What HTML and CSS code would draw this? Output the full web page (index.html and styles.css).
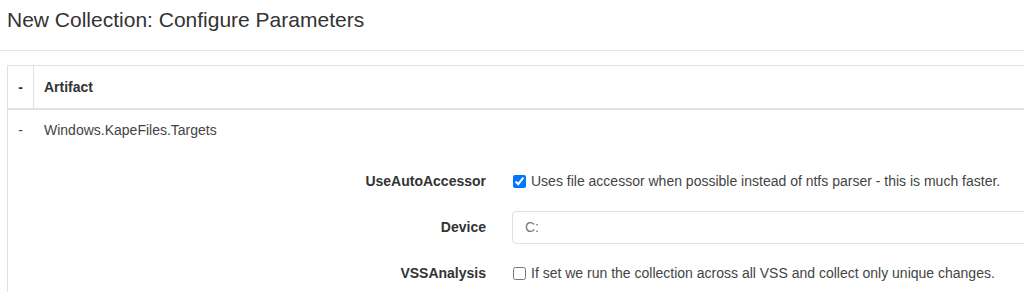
FILE: index.html
```html
<!DOCTYPE html>
<html lang="en">
<head>
    <meta charset="UTF-8">
    <meta name="viewport" content="width=device-width, initial-scale=1.0">
    <title>New Collection: Configure Parameters</title>
    <link rel="stylesheet" href="styles.css">
</head>
<body>

<div class="modal-header">
    <h1>New Collection: Configure Parameters</h1>
</div>

<div class="params">
    <div class="params-head">
        <div class="toggle">-</div>
        <div class="head-name">Artifact</div>
    </div>

    <div class="artifact">
        <div class="artifact-row">
            <div class="toggle">-</div>
            <div class="artifact-name">Windows.KapeFiles.Targets</div>
        </div>

        <div class="param-form">
            <label class="param-label" for="useauto">UseAutoAccessor</label>
            <div class="param-control">
                <input type="checkbox" id="useauto" checked>
                <span>Uses file accessor when possible instead of ntfs parser - this is much faster.</span>
            </div>

            <label class="param-label" for="device">Device</label>
            <div class="param-control">
                <input type="text" id="device" class="text-input" value="C:">
            </div>

            <label class="param-label" for="vss">VSSAnalysis</label>
            <div class="param-control">
                <input type="checkbox" id="vss">
                <span>If set we run the collection across all VSS and collect only unique changes.</span>
            </div>
        </div>
    </div>
</div>

</body>
</html>
```

FILE: styles.css
```css
body {
    font-family: "Liberation Sans", Arial, sans-serif;
    font-size: 14px;
    color: #333;
    margin: 0;
    padding: 0;
    background-color: #fff;
    overflow: hidden;
}
.modal-header {
    padding: 8px 7px 18px;
    border-bottom: 1px solid #e5e5e5;
}
.modal-header h1 {
    margin: 0;
    font-size: 21px;
    font-weight: normal;
    line-height: 24px;
    color: #333;
}
.params {
    margin: 14px 0 0 7px;
    width: 1040px;
    border: 1px solid #dee2e6;
    border-right: none;
    border-bottom: none;
}
.params-head {
    display: flex;
    border-bottom: 2px solid #dee2e6;
    font-weight: bold;
    line-height: 20px;
}
.params-head .toggle {
    width: 25px;
    padding: 11px 0;
    border-right: 1px solid #dee2e6;
}
.head-name {
    padding: 11px 10px;
}
.toggle {
    text-align: center;
}
.artifact-row {
    display: flex;
    line-height: 20px;
    padding: 10px 0;
    color: #444;
}
.artifact-row .toggle {
    width: 25px;
}
.artifact-name {
    padding-left: 11px;
}
.param-form {
    display: grid;
    grid-template-columns: 478px 1fr;
    column-gap: 26px;
    row-gap: 12px;
    margin-top: 14px;
    padding-bottom: 2px;
    align-items: center;
}
.param-label {
    font-weight: bold;
    text-align: right;
    line-height: 34px;
}
.param-control {
    display: flex;
    align-items: center;
    min-height: 34px;
    color: #444;
}
.param-control input[type="checkbox"] {
    margin: 0 5px 0 1px;
    width: 13px;
    height: 13px;
}
.text-input {
    width: 100%;
    box-sizing: border-box;
    height: 33px;
    padding: 6px 12px;
    border: 1px solid #dcdfe3;
    border-radius: 4px;
    font-family: inherit;
    font-size: 14px;
    color: #777;
}
```
